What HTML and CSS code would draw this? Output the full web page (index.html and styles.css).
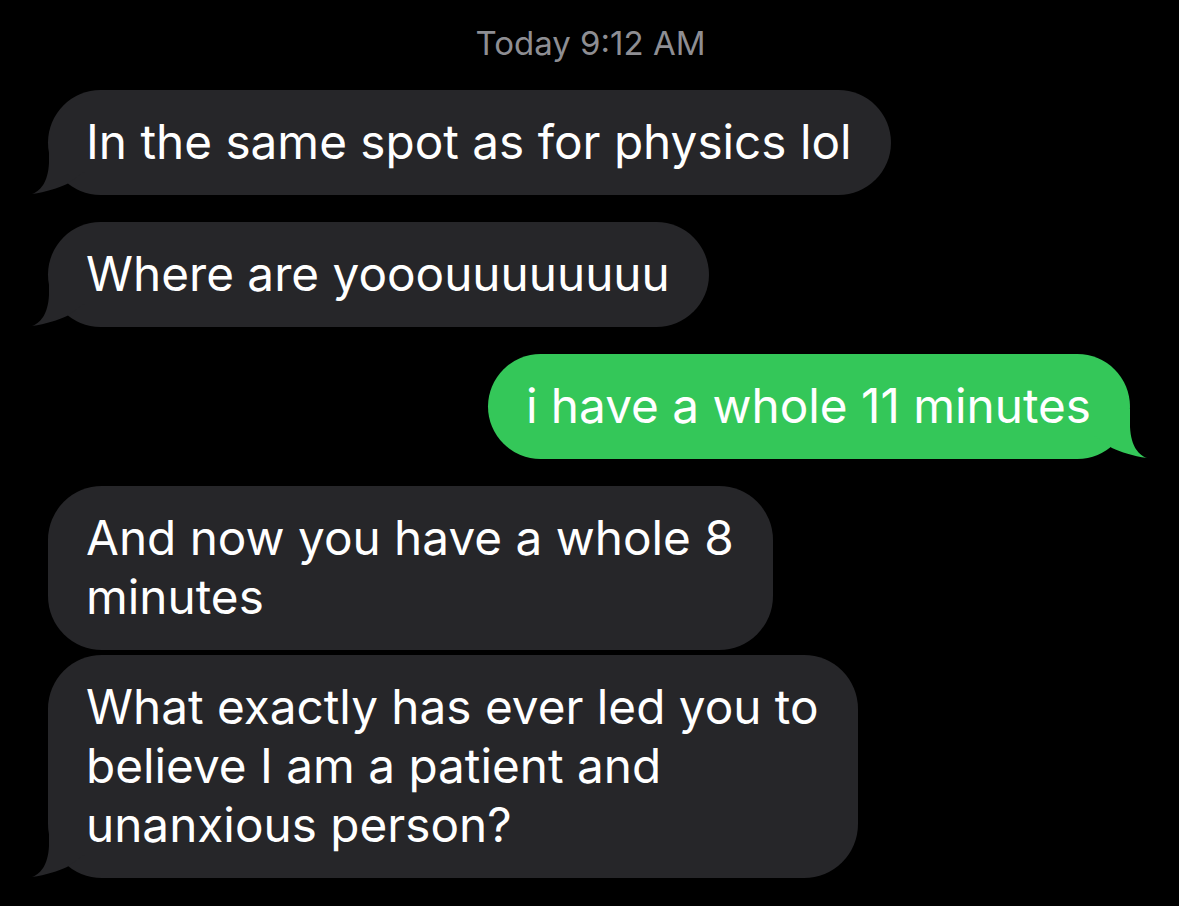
FILE: index.html
```html
<!DOCTYPE html>
<html lang="en">
<head>
<meta charset="utf-8">
<title>Messages</title>
<link rel="stylesheet" href="styles.css">
</head>
<body>
<main class="thread">
  <div class="timestamp">Today 9:12 AM</div>

  <div class="bubble in tail">In the same spot as for physics lol
    <svg class="tail-svg" viewBox="0 0 60 50" width="60" height="50" aria-hidden="true"><path d="M0 49 C8 46 16 38 17 18 L17 0 L55 0 L55 25 L35 39 C26 43 14 47 0 49 Z"/></svg>
  </div>

  <div class="bubble in tail">Where are yooouuuuuuuu
    <svg class="tail-svg" viewBox="0 0 60 50" width="60" height="50" aria-hidden="true"><path d="M0 49 C8 46 16 38 17 18 L17 0 L55 0 L55 25 L35 39 C26 43 14 47 0 49 Z"/></svg>
  </div>

  <div class="bubble out tail">i have a whole 11 minutes
    <svg class="tail-svg" viewBox="0 0 60 50" width="60" height="50" aria-hidden="true"><path d="M0 49 C8 46 16 38 17 18 L17 0 L55 0 L55 25 L35 39 C26 43 14 47 0 49 Z"/></svg>
  </div>

  <div class="bubble in">And now you have a whole 8<br>minutes</div>

  <div class="bubble in tail">What exactly has ever led you to<br>believe I am a patient and<br>unanxious person?
    <svg class="tail-svg" viewBox="0 0 60 50" width="60" height="50" aria-hidden="true"><path d="M0 49 C8 46 16 38 17 18 L17 0 L55 0 L55 25 L35 39 C26 43 14 47 0 49 Z"/></svg>
  </div>
</main>
</body>
</html>
```
FILE: styles.css
```css
html, body {
  margin: 0;
  padding: 0;
  background: #000;
}

body {
  font-family: Inter, "Liberation Sans", "DejaVu Sans", sans-serif;
  color: #fff;
  width: 1179px;
  height: 906px;
  overflow: hidden;
}

.thread {
  display: flex;
  flex-direction: column;
  padding: 0 49px 0 48px;
}

.timestamp {
  text-align: center;
  color: #8e8e93;
  font-size: 33px;
  line-height: 40px;
  padding-top: 23px;
  margin-bottom: 27px;
  padding-left: 3px;
}

.bubble {
  position: relative;
  box-sizing: border-box;
  white-space: nowrap;
  padding: 23px 39px 23px 38px;
  font-size: 47.7px;
  line-height: 59px;
  border-radius: 54px;
  margin-bottom: 27px;
}

.bubble.in {
  align-self: flex-start;
  background: #262629;
}

.bubble.out {
  align-self: flex-end;
  background: #34c759;
}

.bubble.in:not(.tail) {
  margin-bottom: 5px;
}

.tail-svg {
  position: absolute;
  bottom: 0;
  width: 60px;
  height: 50px;
}

.bubble.in .tail-svg {
  left: -16px;
  fill: #262629;
}

.bubble.out .tail-svg {
  right: -17px;
  fill: #34c759;
  transform: scaleX(-1);
}
```
